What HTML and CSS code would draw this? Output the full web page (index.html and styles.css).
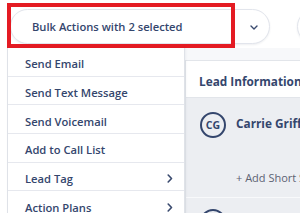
FILE: index.html
```html
<!DOCTYPE html>
<html>
<head>
<meta charset="utf-8">
<link rel="stylesheet" href="styles.css">
</head>
<body>
<div class="page">
  <div class="topbar">
    <div class="pill">
      <span class="pill-label">Bulk Actions with 2 selected</span>
      <svg class="pill-chev" width="8" height="5" viewBox="0 0 8 5"><path d="M1 1 L4 4 L7 1" fill="none" stroke="#3a4a6e" stroke-width="1.4" stroke-linecap="round" stroke-linejoin="round"/></svg>
    </div>
    <div class="pill pill-small"></div>
  </div>
  <div class="main">
    <div class="left-col"></div>
    <div class="right-col">
      <div class="card">
        <div class="card-head">Lead Information</div>
        <div class="card-body">
          <div class="contact contact-first">
            <div class="avatar">CG</div>
            <div class="contact-info">
              <div class="name">Carrie Griffin</div>
              <div class="short">+ Add Short Summary</div>
            </div>
          </div>
          <div class="contact">
            <div class="avatar">JG</div>
          </div>
        </div>
      </div>
    </div>
  </div>
  <div class="highlight"></div>
  <ul class="menu">
    <li class="menu-item">Send Email</li>
    <li class="menu-item">Send Text Message</li>
    <li class="menu-item">Send Voicemail</li>
    <li class="menu-item">Add to Call List</li>
    <li class="menu-item has-sub">Lead Tag<svg class="sub-chev" width="6" height="9" viewBox="0 0 6 9"><path d="M1.2 1 L4.5 4.5 L1.2 8" fill="none" stroke="#3a4a6e" stroke-width="1.6" stroke-linecap="round" stroke-linejoin="round"/></svg></li>
    <li class="menu-item has-sub">Action Plans<svg class="sub-chev" width="6" height="9" viewBox="0 0 6 9"><path d="M1.2 1 L4.5 4.5 L1.2 8" fill="none" stroke="#3a4a6e" stroke-width="1.6" stroke-linecap="round" stroke-linejoin="round"/></svg></li>
  </ul>
</div>
</body>
</html>
```

FILE: styles.css
```css
* { box-sizing: border-box; }
html, body { margin: 0; padding: 0; }
body {
  width: 300px;
  height: 213px;
  overflow: hidden;
  background: #ffffff;
  font-family: "Open Sans", "Liberation Sans", sans-serif;
  color: #34466d;
}
.page {
  position: relative;
  width: 300px;
  height: 213px;
  overflow: hidden;
}
.topbar {
  display: flex;
  align-items: flex-start;
  gap: 27px;
  padding: 9px 0 0 10px;
  height: 48px;
  overflow: hidden;
}
.pill {
  flex: 0 0 260px;
  height: 35px;
  border: 1px solid #e2e5ec;
  border-radius: 18px;
  background: #fff;
  box-shadow: 0 1px 2px rgba(40, 50, 80, 0.08);
  display: flex;
  align-items: center;
  justify-content: space-between;
  padding: 0 11px 0 21px;
}
.pill-small {
  flex: 0 0 60px;
  padding: 0;
}
.pill-label {
  font-size: 11.2px;
  font-weight: 600;
  color: #34466d;
}
.pill-chev { display: block; margin-top: 1px; }
.main {
  display: grid;
  grid-template-columns: 185px 115px;
  height: 165px;
  overflow: hidden;
}
.left-col { background: #fff; }
.right-col {
  padding-top: 12px;
  background: #f7f8fa;
  overflow: hidden;
}
.card {
  height: 100%;
  border-top: 1px solid #e2e5ea;
  border-left: 1px solid #e2e5ea;
  background: #fff;
  overflow: hidden;
}
.card-head {
  height: 37px;
  display: flex;
  align-items: center;
  padding: 3px 0 0 13px;
  font-size: 11.8px;
  font-weight: 700;
  color: #34466d;
  white-space: nowrap;
  border-bottom: 1px solid #e2e5ea;
}
.card-body {
  background: #eceef2;
  height: 100%;
}
.contact {
  display: flex;
  align-items: flex-start;
  gap: 10px;
  padding: 11px 0 0 14px;
  height: 100px;
  border-bottom: 1px solid #f8f9fb;
  white-space: nowrap;
}
.contact-first { padding-top: 14px; }
.avatar {
  flex: 0 0 26px;
  width: 26px;
  height: 26px;
  border: 2px solid #34466d;
  border-radius: 50%;
  display: flex;
  align-items: center;
  justify-content: center;
  font-size: 10.5px;
  font-weight: 700;
  color: #34466d;
}
.contact-info {
  display: flex;
  flex-direction: column;
  gap: 39px;
  padding-top: 3px;
}
.name {
  font-size: 11.8px;
  font-weight: 700;
  color: #34466d;
}
.short {
  font-size: 11px;
  font-weight: 400;
  color: #5c6272;
}
.highlight {
  position: absolute;
  left: 7px;
  top: 3px;
  width: 228px;
  height: 45px;
  border: 4px solid #e41b23;
}
.menu {
  position: absolute;
  left: 7px;
  top: 48px;
  width: 178px;
  margin: 0;
  padding: 0;
  list-style: none;
  background: #fff;
  border-left: 1px solid #dfe2e8;
  border-right: 1px solid #dfe2e8;
  box-shadow: 1px 0 2px rgba(40, 50, 80, 0.06);
}
.menu-item {
  height: 28.7px;
  display: flex;
  align-items: center;
  justify-content: space-between;
  padding: 4px 11px 0 17px;
  font-size: 11.2px;
  font-weight: 600;
  color: #34466d;
  border-bottom: 1px solid #e6e8ee;
  white-space: nowrap;
}
.sub-chev { display: block; }
```
